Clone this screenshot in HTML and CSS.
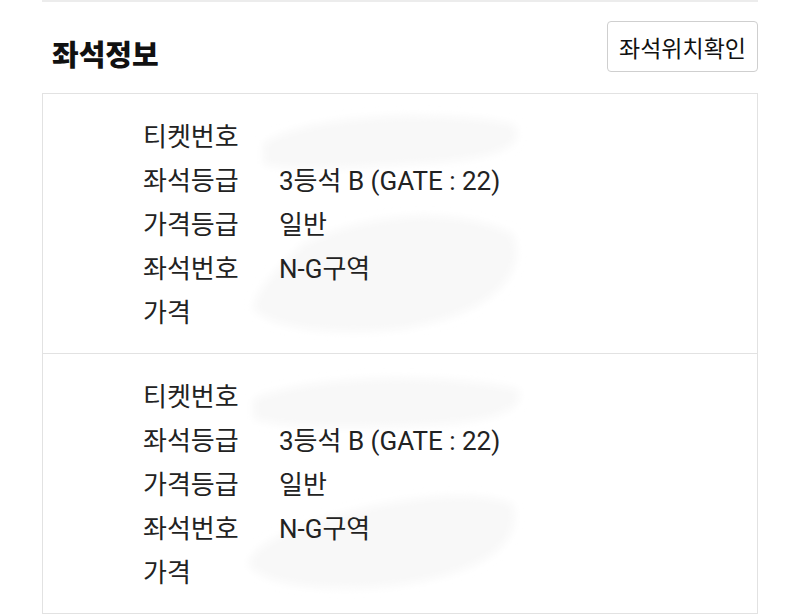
FILE: index.html
```html
<!DOCTYPE html>
<html lang="ko">

<head>
    <meta charset="UTF-8">
    <meta name="viewport" content="width=device-width, initial-scale=1.0">
    <title>좌석정보</title>
    <link rel="stylesheet" href="styles.css">
</head>

<body>
<div class="wrap">
    <div class="head">
        <h2 class="title">좌석정보</h2>
        <button class="seat-button">좌석위치확인</button>
    </div>

    <div class="card">
        <div class="ticket">
            <!-- 가림 처리 -->
            <svg class="smudge" width="300" height="240" viewBox="0 0 300 240">
                <defs>
                    <filter id="soft"><feGaussianBlur stdDeviation="4" /></filter>
                </defs>
                <g filter="url(#soft)" fill="#f8f8f8">
                    <path d="M20 40 C60 10 200 5 270 20 C285 40 260 55 180 60 C120 62 60 70 20 60 Z" />
                    <path d="M60 140 C120 110 210 100 270 130 C285 170 250 210 160 225 C90 232 30 225 10 205 C15 180 40 160 60 140 Z" />
                </g>
            </svg>
            <div class="label">티켓번호</div><div class="value"></div>
            <div class="label">좌석등급</div><div class="value">3등석 B (GATE : 22)</div>
            <div class="label">가격등급</div><div class="value">일반</div>
            <div class="label">좌석번호</div><div class="value">N-G구역</div>
            <div class="label">가격</div><div class="value"></div>
        </div>
        <div class="ticket">
            <svg class="smudge" width="300" height="240" viewBox="0 0 300 240">
                <g filter="url(#soft)" fill="#f8f8f8">
                    <path d="M10 35 C70 10 200 8 275 25 C285 45 250 60 170 62 C110 64 50 66 10 55 Z" />
                    <path d="M40 170 C110 140 220 120 270 140 C280 180 240 210 150 222 C80 228 20 222 5 200 C10 185 25 178 40 170 Z" />
                </g>
            </svg>
            <div class="label">티켓번호</div><div class="value"></div>
            <div class="label">좌석등급</div><div class="value">3등석 B (GATE : 22)</div>
            <div class="label">가격등급</div><div class="value">일반</div>
            <div class="label">좌석번호</div><div class="value">N-G구역</div>
            <div class="label">가격</div><div class="value"></div>
        </div>
    </div>
</div>
</body>

</html>
```

FILE: styles.css
```css
body {
    margin: 0;
    font-family: Roboto, "Noto Sans CJK KR", sans-serif;
    color: #222222;
    background-color: #ffffff;
}

.wrap {
    margin: 0 42px;
    border-top: 2px solid #ececec;
}

.head {
    display: flex;
    justify-content: space-between;
    align-items: flex-start;
    padding: 19px 0 20px 0;
}

.title {
    margin: 12px 0 0 10px;
    font-family: "Noto Sans CJK KR", sans-serif;
    font-size: 29px;
    font-weight: 900;
    line-height: 40px;
    color: #111111;
}

.seat-button {
    height: 51px;
    padding: 0 11px;
    font-family: "Noto Sans CJK KR", sans-serif;
    font-size: 23px;
    color: #111111;
    background-color: #ffffff;
    border: 1px solid #cfcfcf;
    border-radius: 4px;
}

.card {
    border: 1px solid #e2e2e2;
}

.ticket {
    position: relative;
    display: grid;
    grid-template-columns: 136px 1fr;
    padding: 21px 0 18px 100px;
    font-size: 26px;
    line-height: 44px;
}

.ticket + .ticket {
    border-top: 1px solid #e2e2e2;
}

.label,
.value {
    position: relative;
}

/* 번호 가린 자국 */
.smudge {
    position: absolute;
    top: 10px;
    left: 200px;
}
```
